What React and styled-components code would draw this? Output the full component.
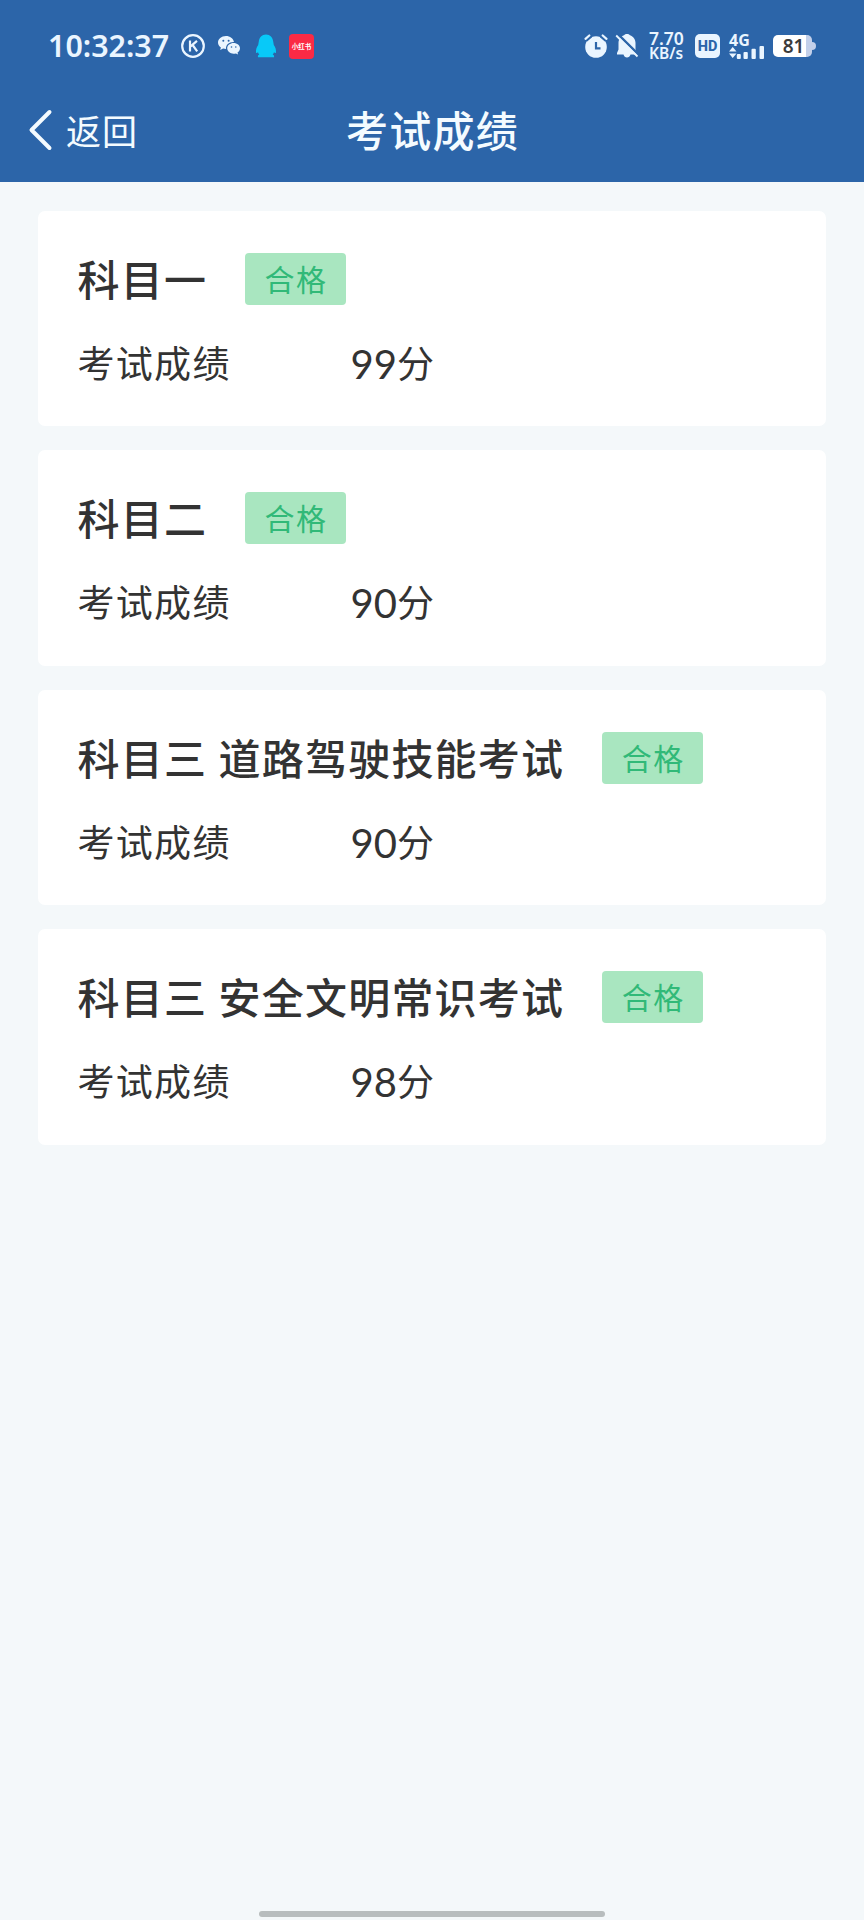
import React from 'react';
import styled, { createGlobalStyle } from 'styled-components';

const GlobalStyle = createGlobalStyle`
  * { box-sizing: border-box; }
  body {
    margin: 0;
    background: #f4f8fa;
    font-family: Lato, 'Noto Sans CJK SC', sans-serif;
    color: #333;
  }
`;

const Screen = styled.div`
  display: flex;
  flex-direction: column;
  width: 864px;
  height: 1920px;
  background: #f4f8fa;
`;

const Header = styled.header`
  height: 182px;
  background: #2c65a9;
  color: #f4fbff;
`;

const StatusBar = styled.div`
  display: flex;
  justify-content: space-between;
  height: 92px;
  padding: 0 48px;
  font-family: 'Noto Sans', 'Noto Sans CJK SC', sans-serif;
`;

const StatusGroup = styled.div`
  display: flex;
  align-items: center;
  height: 92px;
  color: #eaf5ff;
  svg { display: block; flex: none; }
`;

const Clock = styled.time`
  width: 133px;
  font-size: 30.4px;
  font-weight: 600;
  line-height: 92px;
  white-space: nowrap;
`;

const Glyph = styled.svg`
  margin-right: ${(p) => p.$after || 0}px;
`;

const RedApp = styled.span`
  display: flex;
  align-items: center;
  justify-content: center;
  width: 25px;
  height: 25px;
  border-radius: 4px;
  background: #fb2a45;
  color: #fff;
  font-size: 6.5px;
  font-weight: 700;
  white-space: nowrap;
`;

const Speed = styled.div`
  display: flex;
  flex-direction: column;
  width: 46px;
  font-weight: 600;
  white-space: nowrap;
`;

const SpeedValue = styled.span`
  font-size: 17.5px;
  line-height: 14px;
`;

const SpeedUnit = styled.span`
  font-size: 15.5px;
  line-height: 16px;
`;

const HdMark = styled.span`
  width: 25px;
  height: 24px;
  margin-right: 9px;
  border-radius: 5px;
  background: #eaf5ff;
  color: #2c65a9;
  font-family: Roboto, sans-serif;
  font-size: 14.5px;
  font-weight: 800;
  line-height: 25px;
  text-align: center;
`;

const Network = styled.div`
  display: flex;
  flex-direction: column;
  width: 44px;
  height: 25px;
`;

const NetworkName = styled.span`
  height: 12px;
  font-size: 16px;
  font-weight: 700;
  line-height: 12px;
`;

const Battery = styled.div`
  display: flex;
  align-items: center;
`;

const BatteryBody = styled.span`
  width: 39px;
  height: 22px;
  padding-left: 2px;
  border-radius: 5px;
  background: linear-gradient(90deg, #fff 0 33px, #c3d0ea 33px);
  color: #3b3b3b;
  font-size: 19px;
  font-weight: 600;
  line-height: 22px;
  text-align: center;
`;

const BatteryTip = styled.span`
  width: 4px;
  height: 8px;
  border-radius: 0 4px 4px 0;
  background: #c3d0ea;
`;

const NavBar = styled.nav`
  display: grid;
  grid-template-columns: 1fr auto 1fr;
  align-items: center;
  height: 76px;
  padding: 0 27px 0 28px;
`;

const BackButton = styled.button`
  display: flex;
  align-items: center;
  gap: 13px;
  padding: 0;
  border: 0;
  background: none;
  color: inherit;
  font: 400 35px/46px 'Noto Sans CJK SC', sans-serif;
  letter-spacing: 1px;
`;

const BackText = styled.span`
  padding-bottom: 1px;
`;

const PageTitle = styled.h1`
  margin: 0;
  padding-top: 1px;
  font-size: 42px;
  font-weight: 500;
  line-height: 60px;
  letter-spacing: 1.2px;
`;

const ResultList = styled.main`
  display: flex;
  flex: 1;
  flex-direction: column;
  gap: 24px;
  padding: 29px 38px 0;
`;

const Card = styled.section`
  height: 215.4px;
  padding: 42px 40px 0 39.5px;
  border-radius: 7px;
  background: #fff;
`;

const CardHead = styled.div`
  display: flex;
  align-items: center;
  height: 52px;
`;

const Subject = styled.h2`
  margin: 0 37.5px 0 0;
  padding-top: 2px;
  font-size: 42px;
  font-weight: 500;
  line-height: 52px;
  letter-spacing: 1.2px;
  word-spacing: -0.3px;
  white-space: nowrap;
`;

const PassTag = styled.span`
  width: 101px;
  height: 52px;
  padding-left: 20px;
  border-radius: 4px;
  background: #a9e6c0;
  color: #31b978;
  font-size: 30px;
  line-height: 53px;
  letter-spacing: 1.5px;
  white-space: nowrap;
`;

const ScoreRow = styled.div`
  display: flex;
  align-items: center;
  height: 56px;
  margin-top: 31px;
  font-size: 37px;
  line-height: 56px;
`;

const ScoreLabel = styled.span`
  width: 273px;
  letter-spacing: 1.3px;
`;

const ScoreNumber = styled.span`
  font-size: 40px;
`;

const HomeArea = styled.footer`
  display: flex;
  justify-content: center;
  height: 9px;
`;

const HomeIndicator = styled.span`
  width: 346px;
  height: 6px;
  border-radius: 3px;
  background: #b8bdbe;
`;

const results = [
  { subject: '科目一', score: 99 },
  { subject: '科目二', score: 90 },
  { subject: '科目三 道路驾驶技能考试', score: 90 },
  { subject: '科目三 安全文明常识考试', score: 98 },
];

function AppIcons() {
  return (
    <>
      <Glyph width="24" height="24" viewBox="0 0 24 24" fill="none" stroke="currentColor" $after={12}>
        <circle cx="12" cy="12" r="10.8" strokeWidth="2.2" />
        <path d="M9 6.6v10.8M16 6.8l-6.4 5.600M11.600 11l4.600 6.300" strokeWidth="2.2" />
      </Glyph>
      <Glyph width="24" height="22" viewBox="0 0 24 22" $after={14}>
        <path fill="currentColor" d="M9 1C4.300 1 1 4 1 7.600c0 2.100 1.100 3.800 2.900 5L3.200 15l2.900-1.400c1 .3 2 .4 2.900.4C8.700 9.800 12 6.800 17 7 16.300 3.400 13 1 9 1z" />
        <path fill="currentColor" d="M23 13.300c0-3-2.900-5.400-6.400-5.400s-6.400 2.400-6.400 5.400 2.900 5.400 6.400 5.400c.8 0 1.600-.1 2.300-.3l2.200 1.200-.6-2c1.500-1 2.500-2.500 2.500-4.300z" />
        <g fill="#2c65a9">
          <circle cx="6.300" cy="5.800" r="1" />
          <circle cx="11.600" cy="5.800" r="1" />
          <circle cx="14.500" cy="12" r=".8" />
          <circle cx="18.800" cy="12" r=".8" />
        </g>
      </Glyph>
      <Glyph width="22" height="24" viewBox="0 0 22 24" $after={12}>
        <path fill="#08c9f8" d="M11 .5C6.800.5 4.300 3.500 3.800 7.500L3.200 11C1.500 13.400.8 15.800 1 18.200c.1 1.300 1.200.9 2 0 .2.900.7 1.700 1.300 2.300-1.200.6-1.700 1.500-1.300 2.700h16c.4-1.200-.1-2.100-1.300-2.700.6-.6 1.100-1.400 1.300-2.300.8.900 1.900 1.300 2 0 .2-2.400-.5-4.800-2.200-7.200l-.6-3.500C17.700 3.500 15.200.5 11 .5z" />
      </Glyph>
      <RedApp>小红书</RedApp>
    </>
  );
}

function AlertIcons() {
  return (
    <>
      <Glyph width="24" height="24" viewBox="0 0 24 24" fill="none" stroke="currentColor" strokeLinecap="round" $after={7}>
        <circle cx="12" cy="13" r="10.800" fill="currentColor" stroke="none" />
        <path d="M2.500 6.800 7.500 2.500M21.500 6.800 16.500 2.500" stroke="#2c65a9" strokeWidth="2" strokeLinecap="butt" />
        <path d="M1.500 4.800 5.300 1.500M22.500 4.800 18.700 1.500" strokeWidth="2.200" />
        <path d="M12 8v6.300h4.500" stroke="#2c65a9" strokeWidth="2.200" strokeLinecap="butt" />
      </Glyph>
      <Glyph width="24" height="26" viewBox="0 0 24 26" $after={10}>
        <path fill="currentColor" d="M12 1c-1.300 0-2.300.5-3 1.300C5.700 3.500 3.500 6.500 3.500 10v6.500L2 20v1.500h6.500c.5 2 1.800 3 3.500 3s3-1 3.500-3H22V20l-1.500-3.500V10c0-3.500-2.200-6.500-5.500-7.700C14.300 1.500 13.300 1 12 1z" />
        <path d="M2.500.8 24 22" stroke="#2c65a9" strokeWidth="2.500" />
        <path d="M1.200 2.500 22.500 23.500" stroke="currentColor" strokeWidth="1.900" />
      </Glyph>
    </>
  );
}

function SignalBars() {
  return (
    <svg width="36" height="13" viewBox="0 0 36 13" fill="currentColor">
      <path d="M0 5.500 3.700 1l3.800 4.500zM0 7.500h7.500L3.700 12z" />
      <rect x="7.800" y="8" width="4" height="5" rx="1" />
      <rect x="14.500" y="6" width="4.300" height="7" rx="1" />
      <rect x="22.500" y="2.800" width="4.300" height="10.200" rx="1" />
      <rect x="30.500" y="0" width="4.500" height="13" rx="1" />
    </svg>
  );
}

function ResultCard({ subject, score }) {
  return (
    <Card>
      <CardHead>
        <Subject>{subject}</Subject>
        <PassTag>合格</PassTag>
      </CardHead>
      <ScoreRow>
        <ScoreLabel>考试成绩</ScoreLabel>
        <ScoreNumber>{score}</ScoreNumber>
        <span>分</span>
      </ScoreRow>
    </Card>
  );
}

export default function App() {
  return (
    <Screen>
      <GlobalStyle />
      <Header>
        <StatusBar>
          <StatusGroup>
            <Clock>10:32:37</Clock>
            <AppIcons />
          </StatusGroup>
          <StatusGroup>
            <AlertIcons />
            <Speed>
              <SpeedValue>7.70</SpeedValue>
              <SpeedUnit>KB/s</SpeedUnit>
            </Speed>
            <HdMark>HD</HdMark>
            <Network>
              <NetworkName>4G</NetworkName>
              <SignalBars />
            </Network>
            <Battery>
              <BatteryBody>81</BatteryBody>
              <BatteryTip />
            </Battery>
          </StatusGroup>
        </StatusBar>
        <NavBar>
          <BackButton>
            <svg width="25" height="44" viewBox="0 0 25 44" fill="none" stroke="currentColor" strokeWidth="4" strokeLinecap="round" strokeLinejoin="round">
              <path d="M21.500 4 3.500 22 21.500 40" />
            </svg>
            <BackText>返回</BackText>
          </BackButton>
          <PageTitle>考试成绩</PageTitle>
        </NavBar>
      </Header>
      <ResultList>
        {results.map((r) => (
          <ResultCard key={r.subject} {...r} />
        ))}
      </ResultList>
      <HomeArea>
        <HomeIndicator />
      </HomeArea>
    </Screen>
  );
}
